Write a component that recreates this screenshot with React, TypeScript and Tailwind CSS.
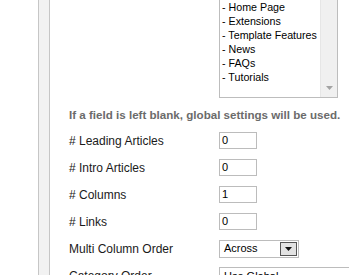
import React from 'react';

const menuItems = ['Home Page', 'Extensions', 'Template Features', 'News', 'FAQs', 'Tutorials'];

const textFields = [
  { label: '# Leading Articles', value: '0' },
  { label: '# Intro Articles', value: '0' },
  { label: '# Columns', value: '1' },
  { label: '# Links', value: '0' },
];

export default function App() {
  return (
    <div className="w-[349px] h-[275px] overflow-hidden bg-white flex pl-[38px] font-['Liberation_Sans',Arial,sans-serif]">
      {/* Side rail */}
      <div className="w-[12px] shrink-0 border-x border-[#c6c6c6] bg-[#f2f2f2]"></div>

      <div className="flex-1 pl-[19px]">
        {/* Menu listbox (scrolled, top out of view) */}
        <div className="ml-[150px] w-[119px] h-[98px] flex border-x border-b border-[#bdbdbd]">
          <div className="flex-1 pl-[2px] text-[10.7px] leading-[14px] text-black">
            {menuItems.map((item) => (
              <div key={item}>- {item}</div>
            ))}
          </div>
          <div className="w-[17px] bg-[#f0f0f0] border-l border-[#e6e6e6] flex flex-col justify-end items-center pb-[7px]">
            <svg width="7" height="4" viewBox="0 0 7 4">
              <path d="M0 0h7L3.5 4z" fill="#a3a3a3" />
            </svg>
          </div>
        </div>

        <div className="mt-[10px] text-[11.6px] leading-[14px] font-bold text-[#6b6b6b] whitespace-nowrap">
          If a field is left blank, global settings will be used.
        </div>

        <div className="mt-[10px] flex flex-col gap-[10px] text-[12px] text-[#1a1a1a]">
          {textFields.map((f) => (
            <div key={f.label} className="flex items-center h-[17px]">
              <div className="w-[150px]">{f.label}</div>
              <div className="w-[38px] h-[17px] border border-[#bcbcbc] pl-[2px] text-[11px] leading-[15px] text-black">
                {f.value}
              </div>
            </div>
          ))}

          <div className="flex items-center h-[17px]">
            <div className="w-[150px] whitespace-nowrap">Multi Column Order</div>
            <div className="w-[80px] h-[18px] border border-[#bcbcbc] flex items-center justify-between pl-[4px] pr-[1px]">
              <span className="text-[11px] text-black">Across</span>
              <div className="w-[17px] h-[14px] bg-[#e2e2e2] border border-[#555] flex items-center justify-center">
                <svg width="7" height="4" viewBox="0 0 7 4">
                  <path d="M0 0h7L3.5 4z" fill="#111" />
                </svg>
              </div>
            </div>
          </div>

          <div className="flex items-start h-[17px]">
            <div className="w-[150px] whitespace-nowrap">Category Order</div>
            <div className="w-[140px] h-[18px] border border-[#bcbcbc] pl-[4px] text-[11px] text-black leading-[16px]">
              Use Global
            </div>
          </div>
        </div>
      </div>
    </div>
  );
}
